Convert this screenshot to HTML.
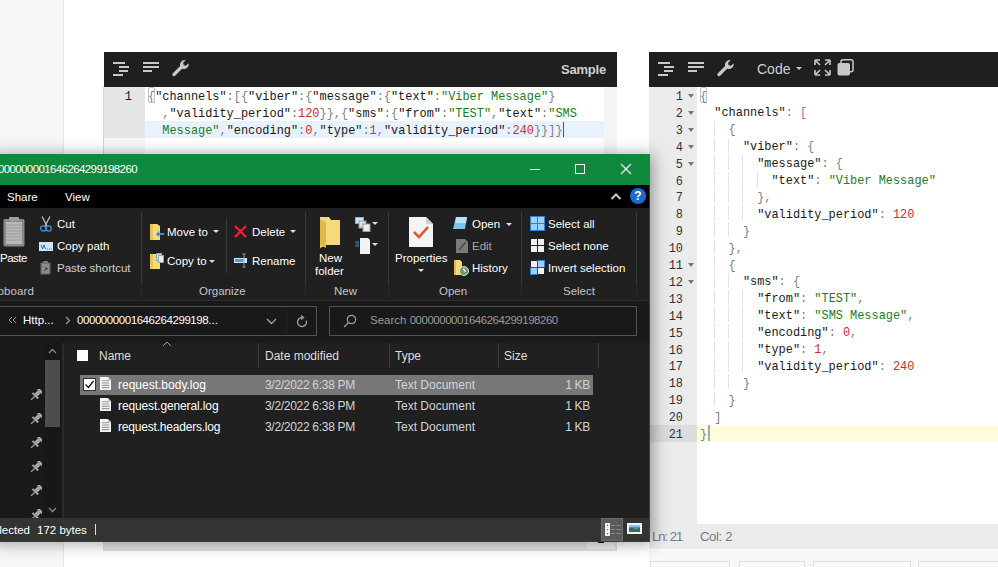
<!DOCTYPE html>
<html><head><meta charset="utf-8">
<style>
*{margin:0;padding:0;box-sizing:border-box}
html,body{width:998px;height:567px;overflow:hidden;background:#fff;font-family:"Liberation Sans",sans-serif;position:relative}
.a{position:absolute}
.mono{font-family:"Liberation Mono",monospace;font-size:11.92px;white-space:pre}
.tb{background:#1f1f1f}
.k{color:#1a1a1a}.p{color:#808080}.s{color:#237a23}.n{color:#d42a2a}
.ln{position:absolute;height:17px;line-height:16.9px}
.ig{position:absolute;width:1px;background:#e2e2e2}
.fa{width:0;height:0;border-left:3px solid transparent;border-right:3px solid transparent;border-top:4px solid #777}
.sep{width:1px;background:#3a3a3a}
.rt{line-height:14px}
.ex.lbl{color:#c4c4c4}
.dd{width:0;height:0;border-left:3px solid transparent;border-right:3px solid transparent;border-top:3px solid #ddd}
.ex{font-family:"Liberation Sans",sans-serif;font-size:11.5px;color:#fff;white-space:nowrap}
</style></head><body>
<!-- sidebar -->
<div class="a" style="left:0;top:0;width:64px;height:567px;background:#f5f6f8;border-right:1px solid #e6e6e6"></div>

<!-- LEFT EDITOR -->
<div class="a tb" style="left:104px;top:52px;width:513px;height:35px"></div>
<div class="a" style="left:103px;top:87px;width:1px;height:460px;background:#d6d6d6"></div>
<div class="a" style="left:104px;top:87px;width:41px;height:460px;background:#f7f7f7"></div>
<div class="a" style="left:104px;top:87px;width:41px;height:50.7px;background:#e6e6e6"></div>
<div class="a" style="left:604px;top:87px;width:13px;height:460px;background:#f5f5f5"></div>
<div class="a" style="left:145px;top:120.8px;width:459px;height:16.9px;background:#e8f2fe"></div>
<div class="a" style="left:103px;top:541px;width:514px;height:10px;background:#e0e0e0"></div>
<div class="a" style="left:587px;top:542px;width:28px;height:7px;background:#eeeeee"></div>
<div class="a" style="left:598px;top:541px;width:6px;height:2px;background:#000"></div>
<div class="a mono" style="left:112px;top:89px;line-height:16.9px;color:#222;width:20px;text-align:right">1</div>
<div class="a mono" style="left:148px;top:89px;line-height:16.9px"><span class="p">{</span><span class="k">"channels"</span><span class="p">:[{</span><span class="k">"viber"</span><span class="p">:{</span><span class="k">"message"</span><span class="p">:{</span><span class="k">"text"</span><span class="p">:</span><span class="s">"Viber Message"</span><span class="p">}</span>
  <span class="p">,</span><span class="k">"validity_period"</span><span class="p">:</span><span class="n">120</span><span class="p">}},{</span><span class="k">"sms"</span><span class="p">:{</span><span class="k">"from"</span><span class="p">:</span><span class="s">"TEST"</span><span class="p">,</span><span class="k">"text"</span><span class="p">:</span><span class="s">"SMS</span>
  <span class="s">Message"</span><span class="p">,</span><span class="k">"encoding"</span><span class="p">:</span><span class="n">0</span><span class="p">,</span><span class="k">"type"</span><span class="p">:</span><span class="n">1</span><span class="p">,</span><span class="k">"validity_period"</span><span class="p">:</span><span class="n">240</span><span class="p">}}]}</span></div>
<div class="a" style="left:148px;top:87px;width:7px;height:16px;border:1px solid #c0c0c0;border-radius:2px"></div>
<div class="a" style="left:563px;top:122px;width:1px;height:15px;background:#555"></div>
<svg class="a" style="left:113px;top:62px" width="17" height="14" viewBox="0 0 17 14"><path d="M0 1h12M6 5h10M6 9h9M0 13h10" stroke="#c8c8c8" stroke-width="2"/></svg><svg class="a" style="left:143px;top:62px" width="17" height="10" viewBox="0 0 17 10"><path d="M0 1h16M0 5h16M0 9h9" stroke="#c8c8c8" stroke-width="2"/></svg><svg class="a" style="left:172px;top:59px" width="18" height="18" viewBox="0 0 18 18"><path d="M2 15.5L9.5 8" stroke="#c8c8c8" stroke-width="3.2" stroke-linecap="round"/><path d="M8.2 7.5a4.8 4.8 0 0 1 5.5-6.3l-2.6 2.6 0.6 2.4 2.4 0.6 2.6-2.6a4.8 4.8 0 0 1-6.3 5.5z" fill="#c8c8c8"/></svg>
<div class="a" style="left:561px;top:62px;font:bold 13px/15px 'Liberation Sans',sans-serif;letter-spacing:-0.2px;color:#d0d0d0">Sample</div>

<!-- RIGHT EDITOR -->
<div class="a tb" style="left:649px;top:52px;width:349px;height:35px"></div>
<svg class="a" style="left:658px;top:62px" width="17" height="14" viewBox="0 0 17 14"><path d="M0 1h12M6 5h10M6 9h9M0 13h10" stroke="#c8c8c8" stroke-width="2"/></svg><svg class="a" style="left:688px;top:62px" width="17" height="10" viewBox="0 0 17 10"><path d="M0 1h16M0 5h16M0 9h9" stroke="#c8c8c8" stroke-width="2"/></svg><svg class="a" style="left:717px;top:59px" width="18" height="18" viewBox="0 0 18 18"><path d="M2 15.5L9.5 8" stroke="#c8c8c8" stroke-width="3.2" stroke-linecap="round"/><path d="M8.2 7.5a4.8 4.8 0 0 1 5.5-6.3l-2.6 2.6 0.6 2.4 2.4 0.6 2.6-2.6a4.8 4.8 0 0 1-6.3 5.5z" fill="#c8c8c8"/></svg><div class="a" style="left:757px;top:61px;font:14px 'Liberation Sans',sans-serif;color:#d0d0d0;line-height:16px">Code</div><div class="a" style="left:796px;top:67px;width:0;height:0;border-left:3px solid transparent;border-right:3px solid transparent;border-top:3px solid #ccc"></div><svg class="a" style="left:814px;top:59px" width="17" height="17" viewBox="0 0 17 17"><path d="M1.5 1.5l4.5 4.5M15.5 1.5l-4.5 4.5M1.5 15.5l4.5-4.5M15.5 15.5l-4.5-4.5" stroke="#c8c8c8" stroke-width="1.6"/><path d="M1 1h5M1 1v5M16 1h-5M16 1v5M1 16h5M1 16v-5M16 16h-5M16 16v-5" stroke="#c8c8c8" stroke-width="1.6"/></svg><svg class="a" style="left:837px;top:59px" width="17" height="17" viewBox="0 0 17 17"><rect x="4" y="0.8" width="12" height="12" rx="2" fill="none" stroke="#c8c8c8" stroke-width="1.5"/><rect x="0.5" y="4" width="12.5" height="12.5" rx="2" fill="#c8c8c8"/></svg>
<div class="a" style="left:649px;top:87px;width:48px;height:437px;background:#ebebeb"></div>
<div class="a" style="left:649px;top:425px;width:48px;height:17px;background:#dcdcdc"></div>
<div class="a" style="left:697px;top:425px;width:301px;height:17px;background:#fffbdd"></div>
<div class="a" style="left:708px;top:425px;width:2px;height:16px;background:#a8a8a0"></div>
<div class="a" style="left:649px;top:524px;width:349px;height:25px;background:#ebebeb"></div>
<div class="a" style="left:649px;top:549px;width:349px;height:1px;background:#fdfdfd"></div>
<div class="a" style="left:649px;top:550px;width:349px;height:17px;background:#f6f7f8"></div>
<div class="a" style="left:650px;top:561px;width:80px;height:10px;border:1px solid #dedede;background:#fafafa"></div>
<div class="a" style="left:739px;top:561px;width:66px;height:10px;border:1px solid #dedede;background:#fafafa"></div>
<div class="a" style="left:813px;top:561px;width:98px;height:10px;border:1px solid #dedede;background:#fafafa"></div>
<div class="a" style="left:918px;top:561px;width:90px;height:10px;border:1px solid #dedede;background:#fafafa"></div>
<div class="a" style="left:652px;top:529px;font-size:13px;line-height:15px;letter-spacing:-1px;color:#7a7a7a">Ln: 21</div>
<div class="a" style="left:700px;top:529px;font-size:13px;line-height:15px;letter-spacing:-0.3px;color:#7a7a7a">Col: 2</div>

<div class="a" style="left:700px;top:87px;width:7px;height:16px;border:1px solid #c0c0c0;border-radius:2px"></div>
<div id="rcode">
<div class="ln mono" style="left:649px;top:89.00px;width:34px;text-align:right;color:#333">1</div>
<div class="a fa" style="left:688px;top:94.00px"></div>
<div class="ln mono" style="left:649px;top:105.90px;width:34px;text-align:right;color:#333">2</div>
<div class="a fa" style="left:688px;top:110.90px"></div>
<div class="ln mono" style="left:649px;top:122.80px;width:34px;text-align:right;color:#333">3</div>
<div class="a fa" style="left:688px;top:127.80px"></div>
<div class="ln mono" style="left:649px;top:139.70px;width:34px;text-align:right;color:#333">4</div>
<div class="a fa" style="left:688px;top:144.70px"></div>
<div class="ln mono" style="left:649px;top:156.60px;width:34px;text-align:right;color:#333">5</div>
<div class="a fa" style="left:688px;top:161.60px"></div>
<div class="ln mono" style="left:649px;top:173.50px;width:34px;text-align:right;color:#333">6</div>
<div class="ln mono" style="left:649px;top:190.40px;width:34px;text-align:right;color:#333">7</div>
<div class="ln mono" style="left:649px;top:207.30px;width:34px;text-align:right;color:#333">8</div>
<div class="ln mono" style="left:649px;top:224.20px;width:34px;text-align:right;color:#333">9</div>
<div class="ln mono" style="left:649px;top:241.10px;width:34px;text-align:right;color:#333">10</div>
<div class="ln mono" style="left:649px;top:258.00px;width:34px;text-align:right;color:#333">11</div>
<div class="a fa" style="left:688px;top:263.00px"></div>
<div class="ln mono" style="left:649px;top:274.90px;width:34px;text-align:right;color:#333">12</div>
<div class="a fa" style="left:688px;top:279.90px"></div>
<div class="ln mono" style="left:649px;top:291.80px;width:34px;text-align:right;color:#333">13</div>
<div class="ln mono" style="left:649px;top:308.70px;width:34px;text-align:right;color:#333">14</div>
<div class="ln mono" style="left:649px;top:325.60px;width:34px;text-align:right;color:#333">15</div>
<div class="ln mono" style="left:649px;top:342.50px;width:34px;text-align:right;color:#333">16</div>
<div class="ln mono" style="left:649px;top:359.40px;width:34px;text-align:right;color:#333">17</div>
<div class="ln mono" style="left:649px;top:376.30px;width:34px;text-align:right;color:#333">18</div>
<div class="ln mono" style="left:649px;top:393.20px;width:34px;text-align:right;color:#333">19</div>
<div class="ln mono" style="left:649px;top:410.10px;width:34px;text-align:right;color:#333">20</div>
<div class="ln mono" style="left:649px;top:427.00px;width:34px;text-align:right;color:#333">21</div>
<div class="ln mono" style="left:700px;top:88.50px"><span class="p">{</span></div>
<div class="ln mono" style="left:700px;top:105.40px">  <span class="k">&quot;channels&quot;</span><span class="p">:</span> <span class="p">[</span></div>
<div class="ig" style="left:714px;top:120.8px;height:15px"></div>
<div class="ln mono" style="left:700px;top:122.30px">    <span class="p">{</span></div>
<div class="ig" style="left:714px;top:137.7px;height:15px"></div>
<div class="ig" style="left:728px;top:137.7px;height:15px"></div>
<div class="ln mono" style="left:700px;top:139.20px">      <span class="k">&quot;viber&quot;</span><span class="p">:</span> <span class="p">{</span></div>
<div class="ig" style="left:714px;top:154.6px;height:15px"></div>
<div class="ig" style="left:728px;top:154.6px;height:15px"></div>
<div class="ig" style="left:742px;top:154.6px;height:15px"></div>
<div class="ln mono" style="left:700px;top:156.10px">        <span class="k">&quot;message&quot;</span><span class="p">:</span> <span class="p">{</span></div>
<div class="ig" style="left:714px;top:171.5px;height:15px"></div>
<div class="ig" style="left:728px;top:171.5px;height:15px"></div>
<div class="ig" style="left:742px;top:171.5px;height:15px"></div>
<div class="ig" style="left:757px;top:171.5px;height:15px"></div>
<div class="ln mono" style="left:700px;top:173.00px">          <span class="k">&quot;text&quot;</span><span class="p">:</span> <span class="s">&quot;Viber Message&quot;</span></div>
<div class="ig" style="left:714px;top:188.4px;height:15px"></div>
<div class="ig" style="left:728px;top:188.4px;height:15px"></div>
<div class="ig" style="left:742px;top:188.4px;height:15px"></div>
<div class="ln mono" style="left:700px;top:189.90px">        <span class="p">}</span><span class="p">,</span></div>
<div class="ig" style="left:714px;top:205.3px;height:15px"></div>
<div class="ig" style="left:728px;top:205.3px;height:15px"></div>
<div class="ig" style="left:742px;top:205.3px;height:15px"></div>
<div class="ln mono" style="left:700px;top:206.80px">        <span class="k">&quot;validity_period&quot;</span><span class="p">:</span> <span class="n">120</span></div>
<div class="ig" style="left:714px;top:222.2px;height:15px"></div>
<div class="ig" style="left:728px;top:222.2px;height:15px"></div>
<div class="ln mono" style="left:700px;top:223.70px">      <span class="p">}</span></div>
<div class="ig" style="left:714px;top:239.1px;height:15px"></div>
<div class="ln mono" style="left:700px;top:240.60px">    <span class="p">}</span><span class="p">,</span></div>
<div class="ig" style="left:714px;top:256.0px;height:15px"></div>
<div class="ln mono" style="left:700px;top:257.50px">    <span class="p">{</span></div>
<div class="ig" style="left:714px;top:272.9px;height:15px"></div>
<div class="ig" style="left:728px;top:272.9px;height:15px"></div>
<div class="ln mono" style="left:700px;top:274.40px">      <span class="k">&quot;sms&quot;</span><span class="p">:</span> <span class="p">{</span></div>
<div class="ig" style="left:714px;top:289.8px;height:15px"></div>
<div class="ig" style="left:728px;top:289.8px;height:15px"></div>
<div class="ig" style="left:742px;top:289.8px;height:15px"></div>
<div class="ln mono" style="left:700px;top:291.30px">        <span class="k">&quot;from&quot;</span><span class="p">:</span> <span class="s">&quot;TEST&quot;</span><span class="p">,</span></div>
<div class="ig" style="left:714px;top:306.7px;height:15px"></div>
<div class="ig" style="left:728px;top:306.7px;height:15px"></div>
<div class="ig" style="left:742px;top:306.7px;height:15px"></div>
<div class="ln mono" style="left:700px;top:308.20px">        <span class="k">&quot;text&quot;</span><span class="p">:</span> <span class="s">&quot;SMS Message&quot;</span><span class="p">,</span></div>
<div class="ig" style="left:714px;top:323.6px;height:15px"></div>
<div class="ig" style="left:728px;top:323.6px;height:15px"></div>
<div class="ig" style="left:742px;top:323.6px;height:15px"></div>
<div class="ln mono" style="left:700px;top:325.10px">        <span class="k">&quot;encoding&quot;</span><span class="p">:</span> <span class="n">0</span><span class="p">,</span></div>
<div class="ig" style="left:714px;top:340.5px;height:15px"></div>
<div class="ig" style="left:728px;top:340.5px;height:15px"></div>
<div class="ig" style="left:742px;top:340.5px;height:15px"></div>
<div class="ln mono" style="left:700px;top:342.00px">        <span class="k">&quot;type&quot;</span><span class="p">:</span> <span class="n">1</span><span class="p">,</span></div>
<div class="ig" style="left:714px;top:357.4px;height:15px"></div>
<div class="ig" style="left:728px;top:357.4px;height:15px"></div>
<div class="ig" style="left:742px;top:357.4px;height:15px"></div>
<div class="ln mono" style="left:700px;top:358.90px">        <span class="k">&quot;validity_period&quot;</span><span class="p">:</span> <span class="n">240</span></div>
<div class="ig" style="left:714px;top:374.3px;height:15px"></div>
<div class="ig" style="left:728px;top:374.3px;height:15px"></div>
<div class="ln mono" style="left:700px;top:375.80px">      <span class="p">}</span></div>
<div class="ig" style="left:714px;top:391.2px;height:15px"></div>
<div class="ln mono" style="left:700px;top:392.70px">    <span class="p">}</span></div>
<div class="ln mono" style="left:700px;top:409.60px">  <span class="p">]</span></div>
<div class="ln mono" style="left:700px;top:426.50px"><span class="p">}</span></div>
</div><!--/rcode-->

<!-- EXPLORER WINDOW -->
<div class="a" style="left:-10px;top:154px;width:660px;height:388px;background:#202020;box-shadow:3px 1px 15px rgba(0,0,0,.38);border-right:1px solid #10893e;border-bottom:1px solid #10893e"></div>
<!-- title -->
<div class="a" style="left:0;top:154px;width:649px;height:31px;background:#10893e"></div>
<div class="a ex" style="left:-163px;top:162px;width:300px;text-align:right;letter-spacing:-0.6px;line-height:15px">0000000001646264299198260</div>
<div class="a" style="left:530px;top:169px;width:10px;height:1px;background:#fff"></div>
<div class="a" style="left:575px;top:164px;width:10px;height:10px;border:1px solid #fff"></div>
<svg class="a" style="left:620px;top:163px" width="12" height="12" viewBox="0 0 12 12"><path d="M1 1L11 11M11 1L1 11" stroke="#fff" stroke-width="1.1"/></svg>
<!-- tabs -->
<div class="a" style="left:0;top:185px;width:649px;height:23px;background:#000"></div>
<div class="a ex" style="left:7px;top:190px;line-height:14px">Share</div>
<div class="a ex" style="left:65px;top:190px;line-height:14px">View</div>
<svg class="a" style="left:610px;top:192px" width="12" height="8" viewBox="0 0 12 8"><path d="M1.5 7L6 2.5L10.5 7" stroke="#c8c8c8" stroke-width="2" fill="none"/></svg>
<div class="a" style="left:630px;top:188px;width:16px;height:16px;border-radius:50%;background:#1c6cc8;color:#fff;font:bold 12px 'Liberation Sans',sans-serif;text-align:center;line-height:16px">?</div>
<!-- ribbon -->
<div class="a" style="left:0;top:208px;width:649px;height:92px;background:#202020"></div>
<div class="a" style="left:0;top:300px;width:649px;height:1px;background:#2e2e2e"></div>
<div class="a" style="left:0;top:301px;width:649px;height:41px;background:#191919"></div>
<div class="a sep" style="left:141px;top:212px;height:71px"></div>
<div class="a sep" style="left:305px;top:212px;height:71px"></div>
<div class="a sep" style="left:388px;top:212px;height:71px"></div>
<div class="a sep" style="left:521px;top:212px;height:71px"></div>
<div class="a sep" style="left:636px;top:212px;height:71px"></div>
<div class="a sep" style="left:226px;top:218px;height:55px"></div>
<div class="a" style="left:141px;top:283px;width:1px;height:14px;background:#2a2a2a"></div>
<div class="a" style="left:305px;top:283px;width:1px;height:14px;background:#2a2a2a"></div>
<div class="a" style="left:388px;top:283px;width:1px;height:14px;background:#2a2a2a"></div>
<div class="a" style="left:521px;top:283px;width:1px;height:14px;background:#2a2a2a"></div>
<div class="a" style="left:636px;top:283px;width:1px;height:14px;background:#2a2a2a"></div>
<!-- clipboard -->
<svg class="a" style="left:3px;top:216px" width="22" height="31" viewBox="0 0 22 31"><rect x="0.5" y="3" width="21" height="27.5" rx="1.5" fill="#8a8a8a"/><rect x="3" y="6" width="16" height="22" fill="#b8b8b8"/><path d="M3 9h16M3 12h16M3 15h16M3 18h16M3 21h16M3 24h16" stroke="#9a9a9a" stroke-width="1"/><rect x="6" y="1" width="10" height="4" rx="1" fill="#a0a0a0"/></svg>
<div class="a ex rt" style="left:0px;top:251px;letter-spacing:-0.5px">Paste</div>
<svg class="a" style="left:40px;top:216px" width="12" height="16" viewBox="0 0 12 16"><path d="M2 0.5L7 10M10 0.5L5 10" stroke="#c0c0c0" stroke-width="1.3" fill="none"/><circle cx="3.3" cy="12.5" r="2.6" stroke="#3d8fd8" stroke-width="1.4" fill="none"/><circle cx="8.7" cy="12.5" r="2.6" stroke="#3d8fd8" stroke-width="1.4" fill="none"/></svg>
<div class="a ex rt" style="left:57px;top:217px">Cut</div>
<svg class="a" style="left:39px;top:242px" width="14" height="9" viewBox="0 0 14 9"><rect x="0" y="0" width="14" height="9" fill="#cfe6fb"/><path d="M2 3l1.5 4 1.5-4 1.5 4M8 7h1M10 7h1M12 7h1" stroke="#2a6fb0" stroke-width="1" fill="none"/></svg>
<div class="a ex rt" style="left:57px;top:239px">Copy path</div>
<svg class="a" style="left:40px;top:261px" width="11" height="14" viewBox="0 0 11 14"><rect x="0.5" y="1.5" width="10" height="12" rx="1" fill="#6e6e6e"/><rect x="2" y="3" width="7" height="9" fill="#8c8c8c"/><path d="M4 10l3-3M5 7h2v2" stroke="#3a3a3a" stroke-width="1" fill="none"/><rect x="3" y="0" width="5" height="2.5" fill="#777"/></svg>
<div class="a ex rt" style="left:57px;top:261px;color:#cfcfcf">Paste shortcut</div>
<div class="a ex rt lbl" style="left:-100px;top:284px;width:134px;text-align:right;letter-spacing:0.1px">Clipboard</div>
<!-- organize -->
<svg class="a" style="left:150px;top:224px" width="14" height="16" viewBox="0 0 14 16"><path d="M0 0h7l3 2v14H0z" fill="#f6d97a"/><path d="M0 0h3v16H0z" fill="#e8c45a"/><path d="M6 10l3-3v2h5v2H9v2z" fill="#3a8fd8"/></svg>
<div class="a ex rt" style="left:167px;top:225px">Move to</div>
<div class="a dd" style="left:213px;top:230px"></div>
<svg class="a" style="left:150px;top:253px" width="14" height="16" viewBox="0 0 14 16"><path d="M0 1h7l3 2v13H0z" fill="#f6d97a"/><path d="M0 1h3v15H0z" fill="#e8c45a"/><rect x="6.5" y="0.5" width="5" height="7" fill="#ddd" stroke="#8aa" stroke-width="1"/><rect x="8.5" y="2.5" width="5" height="7" fill="#eee" stroke="#8aa" stroke-width="1"/></svg>
<div class="a ex rt" style="left:167px;top:254px">Copy to</div>
<div class="a dd" style="left:209px;top:260px"></div>
<svg class="a" style="left:234px;top:225px" width="13" height="13" viewBox="0 0 13 13"><path d="M1 1L12 12M12 1L1 12" stroke="#e8262b" stroke-width="2.2"/></svg>
<div class="a ex rt" style="left:252px;top:225px">Delete</div>
<div class="a dd" style="left:290px;top:230px"></div>
<svg class="a" style="left:234px;top:253px" width="14" height="15" viewBox="0 0 14 15"><rect x="0" y="5" width="13" height="5" fill="#cfe6fb"/><rect x="1" y="6" width="8" height="3" fill="#4a9ae0"/><path d="M10 1v13M8.5 1h3M8.5 14h3" stroke="#9a9a9a" stroke-width="1" fill="none"/></svg>
<div class="a ex rt" style="left:252px;top:254px">Rename</div>
<div class="a ex rt lbl" style="left:199px;top:284px">Organize</div>
<!-- new -->
<svg class="a" style="left:320px;top:217px" width="20" height="31" viewBox="0 0 20 31"><path d="M0 0h9l2 3h9v25H6L0 31z" fill="#f6d97a"/><path d="M0 2l6 3v26L0 28z" fill="#e0b84c"/></svg>
<div class="a ex rt" style="left:319px;top:251px">New</div>
<div class="a ex rt" style="left:315px;top:264px">folder</div>
<svg class="a" style="left:355px;top:217px" width="16" height="15" viewBox="0 0 16 15"><rect x="0.5" y="0.5" width="8" height="6" fill="#cfe6fb" stroke="#9ab" stroke-width="1"/><rect x="4" y="4" width="7" height="7" fill="#ddd" stroke="#999" stroke-width="1"/><rect x="8" y="7" width="7" height="7.5" fill="#eee" stroke="#999" stroke-width="1"/></svg>
<div class="a dd" style="left:372px;top:222px"></div>
<svg class="a" style="left:355px;top:237px" width="16" height="18" viewBox="0 0 16 18"><path d="M5 1h8l2 2v14H5z" fill="#f2f2f2"/><path d="M0 5h4M1 7h3M0 9h4" stroke="#3a8fd8" stroke-width="1"/></svg>
<div class="a dd" style="left:372px;top:243px"></div>
<div class="a ex rt lbl" style="left:334px;top:284px">New</div>
<!-- open -->
<svg class="a" style="left:409px;top:217px" width="24" height="30" viewBox="0 0 24 30"><path d="M0 0h17l7 7v23H0z" fill="#f4f4f4"/><path d="M17 0v7h7z" fill="#d0d0d0"/><path d="M5 15l5 5 9-10" stroke="#e2582a" stroke-width="2.6" fill="none"/></svg>
<div class="a ex rt" style="left:395px;top:251px">Properties</div>
<div class="a dd" style="left:418px;top:269px"></div>
<svg class="a" style="left:453px;top:216px" width="15" height="14" viewBox="0 0 15 14"><path d="M3 1h11l-2 12H0z" fill="#7fc3e8"/><path d="M3 1h11l-1 6H2z" fill="#b8e2f6"/></svg>
<div class="a ex rt" style="left:472px;top:217px">Open</div>
<div class="a dd" style="left:506px;top:223px"></div>
<svg class="a" style="left:456px;top:239px" width="12" height="14" viewBox="0 0 12 14"><path d="M0 0h9l3 3v11H0z" fill="#7a7a7a"/><path d="M3 11l7-8" stroke="#4a4a4a" stroke-width="1.3"/></svg>
<div class="a ex rt" style="left:472px;top:239px;color:#a8a8a8">Edit</div>
<svg class="a" style="left:454px;top:260px" width="15" height="16" viewBox="0 0 15 16"><path d="M0 0h6l2 2v13H0z" fill="#f6d97a"/><path d="M0 0h2v15H0z" fill="#e0b84c"/><circle cx="10" cy="11" r="4.5" fill="#6a9a6a" stroke="#ddd" stroke-width="1"/><path d="M10 8v3h2" stroke="#fff" stroke-width="1" fill="none"/></svg>
<div class="a ex rt" style="left:472px;top:261px">History</div>
<div class="a ex rt lbl" style="left:439px;top:284px">Open</div>
<!-- select -->
<svg class="a" style="left:530px;top:216px" width="15" height="15" viewBox="0 0 15 15"><rect x="0" y="0" width="15" height="15" fill="#2e7fd0"/><rect x="1" y="1" width="6" height="6" fill="#9bd0f7"/><rect x="8" y="1" width="6" height="6" fill="#9bd0f7"/><rect x="1" y="8" width="6" height="6" fill="#9bd0f7"/><rect x="8" y="8" width="6" height="6" fill="#9bd0f7"/></svg>
<div class="a ex rt" style="left:548px;top:217px">Select all</div>
<svg class="a" style="left:530px;top:238px" width="15" height="15" viewBox="0 0 15 15"><rect x="1" y="1" width="6" height="6" fill="#f0f0f0"/><rect x="8" y="1" width="6" height="6" fill="#f0f0f0"/><rect x="1" y="8" width="6" height="6" fill="#f0f0f0"/><rect x="8" y="8" width="6" height="6" fill="#f0f0f0"/></svg>
<div class="a ex rt" style="left:548px;top:239px">Select none</div>
<svg class="a" style="left:530px;top:260px" width="15" height="15" viewBox="0 0 15 15"><rect x="7.5" y="0" width="7.5" height="7.5" fill="#2e7fd0"/><rect x="0" y="7.5" width="7.5" height="7.5" fill="#2e7fd0"/><rect x="1" y="1" width="6" height="6" fill="#f0f0f0"/><rect x="8" y="1" width="6" height="6" fill="#9bd0f7"/><rect x="1" y="8" width="6" height="6" fill="#9bd0f7"/><rect x="8" y="8" width="6" height="6" fill="#f0f0f0"/></svg>
<div class="a ex rt" style="left:548px;top:261px">Invert selection</div>
<div class="a ex rt lbl" style="left:563px;top:284px">Select</div>
<!-- address bar -->
<div class="a" style="left:-1px;top:306px;width:318px;height:30px;border:1px solid #525252;background:#191919"></div>
<div class="a" style="left:286px;top:307px;width:1px;height:28px;background:#222"></div>
<svg class="a" style="left:8px;top:316px" width="9" height="8" viewBox="0 0 9 8"><path d="M4 1L1 4l3 3M8 1L5 4l3 3" stroke="#999" stroke-width="1" fill="none"/></svg>
<div class="a ex rt" style="left:23px;top:313px">Http...</div>
<svg class="a" style="left:65px;top:316px" width="6" height="9" viewBox="0 0 6 9"><path d="M1 1l3.5 3.5L1 8" stroke="#999" stroke-width="1.3" fill="none"/></svg>
<div class="a ex rt" style="left:77px;top:313px"><span style="letter-spacing:-0.43px">0000000001646264299198</span>...</div>
<svg class="a" style="left:266px;top:318px" width="11" height="7" viewBox="0 0 11 7"><path d="M1 1l4.5 4.5L10 1" stroke="#a0a0a0" stroke-width="1.4" fill="none"/></svg>
<svg class="a" style="left:296px;top:315px" width="12" height="13" viewBox="0 0 12 13"><path d="M6 2.5a4.5 4.5 0 1 0 4.2 2.9" stroke="#9a9a9a" stroke-width="1.4" fill="none"/><path d="M5 0.5l2.5 2-2.5 2" stroke="#9a9a9a" stroke-width="1.4" fill="none"/></svg>
<div class="a" style="left:329px;top:306px;width:308px;height:30px;border:1px solid #525252;background:#191919"></div>
<svg class="a" style="left:343px;top:314px" width="14" height="14" viewBox="0 0 14 14"><circle cx="8.5" cy="5.5" r="4.2" stroke="#9a9a9a" stroke-width="1.2" fill="none"/><path d="M5.5 8.5L1 13" stroke="#9a9a9a" stroke-width="1.3"/></svg>
<div class="a ex rt" style="left:370px;top:313px;color:#999">Search <span style="letter-spacing:-0.47px">0000000001646264299198260</span></div>
<!-- nav pane -->
<div class="a" style="left:0;top:336px;width:649px;height:182px;background:#191919"></div>
<div class="a" style="left:44px;top:343px;width:17px;height:175px;background:#171717"></div>
<div class="a" style="left:45px;top:360px;width:15px;height:67px;background:#4d4d4d"></div>
<svg class="a" style="left:48px;top:348px" width="9" height="6" viewBox="0 0 9 6"><path d="M1 5l3.5-3.5L8 5" stroke="#8a8a8a" stroke-width="1.3" fill="none"/></svg>
<svg class="a" style="left:48px;top:507px" width="9" height="6" viewBox="0 0 9 6"><path d="M1 1l3.5 3.5L8 1" stroke="#8a8a8a" stroke-width="1.3" fill="none"/></svg>
<div class="a" style="left:62px;top:343px;width:2px;height:175px;background:#2a2a2a"></div>
<svg class="a" style="left:30px;top:389px" width="12" height="12" viewBox="0 0 12 12"><g transform="rotate(45 6 6)" fill="#a3abb3"><rect x="3" y="-1" width="6" height="2.5"/><rect x="4" y="1.5" width="4" height="4.5"/><rect x="2" y="6" width="8" height="2"/><rect x="5.4" y="8" width="1.2" height="5"/></g></svg>
<svg class="a" style="left:30px;top:413px" width="12" height="12" viewBox="0 0 12 12"><g transform="rotate(45 6 6)" fill="#a3abb3"><rect x="3" y="-1" width="6" height="2.5"/><rect x="4" y="1.5" width="4" height="4.5"/><rect x="2" y="6" width="8" height="2"/><rect x="5.4" y="8" width="1.2" height="5"/></g></svg>
<svg class="a" style="left:30px;top:437px" width="12" height="12" viewBox="0 0 12 12"><g transform="rotate(45 6 6)" fill="#a3abb3"><rect x="3" y="-1" width="6" height="2.5"/><rect x="4" y="1.5" width="4" height="4.5"/><rect x="2" y="6" width="8" height="2"/><rect x="5.4" y="8" width="1.2" height="5"/></g></svg>
<svg class="a" style="left:30px;top:461px" width="12" height="12" viewBox="0 0 12 12"><g transform="rotate(45 6 6)" fill="#a3abb3"><rect x="3" y="-1" width="6" height="2.5"/><rect x="4" y="1.5" width="4" height="4.5"/><rect x="2" y="6" width="8" height="2"/><rect x="5.4" y="8" width="1.2" height="5"/></g></svg>
<svg class="a" style="left:30px;top:485px" width="12" height="12" viewBox="0 0 12 12"><g transform="rotate(45 6 6)" fill="#a3abb3"><rect x="3" y="-1" width="6" height="2.5"/><rect x="4" y="1.5" width="4" height="4.5"/><rect x="2" y="6" width="8" height="2"/><rect x="5.4" y="8" width="1.2" height="5"/></g></svg>
<svg class="a" style="left:30px;top:509px" width="12" height="12" viewBox="0 0 12 12"><g transform="rotate(45 6 6)" fill="#a3abb3"><rect x="3" y="-1" width="6" height="2.5"/><rect x="4" y="1.5" width="4" height="4.5"/><rect x="2" y="6" width="8" height="2"/><rect x="5.4" y="8" width="1.2" height="5"/></g></svg>
<!-- file list -->
<div class="a" style="left:64px;top:343px;width:585px;height:175px;background:#202020"></div>
<div class="a" style="left:77px;top:350px;width:11px;height:11px;background:#fff"></div>
<div class="a ex rt" style="left:99px;top:349px;color:#dedede;font-size:12px">Name</div>
<svg class="a" style="left:162px;top:341px" width="10" height="6" viewBox="0 0 10 6"><path d="M1 5l4-4 4 4" stroke="#a0a0a0" stroke-width="1" fill="none"/></svg>
<div class="a" style="left:258px;top:343px;width:1px;height:25px;background:#3c3c3c"></div>
<div class="a" style="left:389px;top:343px;width:1px;height:25px;background:#3c3c3c"></div>
<div class="a" style="left:498px;top:343px;width:1px;height:25px;background:#3c3c3c"></div>
<div class="a" style="left:598px;top:343px;width:1px;height:25px;background:#3c3c3c"></div>
<div class="a ex rt" style="left:265px;top:349px;color:#dedede;font-size:12px">Date modified</div>
<div class="a ex rt" style="left:395px;top:349px;color:#dedede;font-size:12px">Type</div>
<div class="a ex rt" style="left:504px;top:349px;color:#dedede;font-size:12px">Size</div>
<div class="a" style="left:80px;top:375px;width:513px;height:20px;background:#777"></div>
<div class="a" style="left:83px;top:378px;width:13px;height:13px;background:#fff;border:1px solid #333"></div>
<svg class="a" style="left:84px;top:379px" width="11" height="11" viewBox="0 0 11 11"><path d="M1.5 5.5l3 3 5-6.5" stroke="#111" stroke-width="1.3" fill="none"/></svg>
<svg class="a" style="left:100px;top:377px" width="11" height="13" viewBox="0 0 12 14" preserveAspectRatio="none"><path d="M0 0h8.5l3.5 3.5V14H0z" fill="#f4f4f4"/><path d="M8.5 0v3.5H12z" fill="#c8c8c8"/><path d="M2 4h8M2 6.5h8M2 9h8M2 11.5h8" stroke="#9a9a9a" stroke-width="1.2"/></svg>
<div class="a ex rt" style="left:118px;top:378px;font-size:12px">request.body.log</div>
<div class="a ex rt" style="left:265px;top:378px;color:#d4d4d4;font-size:12px;letter-spacing:-0.3px">3/2/2022 6:38 PM</div>
<div class="a ex rt" style="left:395px;top:378px;color:#d4d4d4;font-size:12px">Text Document</div>
<div class="a ex rt" style="left:540px;top:378px;width:50px;text-align:right;color:#d4d4d4;font-size:12px;letter-spacing:-0.3px">1 KB</div>
<svg class="a" style="left:100px;top:398px" width="11" height="13" viewBox="0 0 12 14" preserveAspectRatio="none"><path d="M0 0h8.5l3.5 3.5V14H0z" fill="#f4f4f4"/><path d="M8.5 0v3.5H12z" fill="#c8c8c8"/><path d="M2 4h8M2 6.5h8M2 9h8M2 11.5h8" stroke="#9a9a9a" stroke-width="1.2"/></svg>
<div class="a ex rt" style="left:118px;top:399px;font-size:12px;letter-spacing:-0.12px">request.general.log</div>
<div class="a ex rt" style="left:265px;top:399px;color:#d4d4d4;font-size:12px;letter-spacing:-0.3px">3/2/2022 6:38 PM</div>
<div class="a ex rt" style="left:395px;top:399px;color:#d4d4d4;font-size:12px">Text Document</div>
<div class="a ex rt" style="left:540px;top:399px;width:50px;text-align:right;color:#d4d4d4;font-size:12px;letter-spacing:-0.3px">1 KB</div>
<svg class="a" style="left:100px;top:419px" width="11" height="13" viewBox="0 0 12 14" preserveAspectRatio="none"><path d="M0 0h8.5l3.5 3.5V14H0z" fill="#f4f4f4"/><path d="M8.5 0v3.5H12z" fill="#c8c8c8"/><path d="M2 4h8M2 6.5h8M2 9h8M2 11.5h8" stroke="#9a9a9a" stroke-width="1.2"/></svg>
<div class="a ex rt" style="left:118px;top:420px;font-size:12px;letter-spacing:-0.2px">request.headers.log</div>
<div class="a ex rt" style="left:265px;top:420px;color:#d4d4d4;font-size:12px;letter-spacing:-0.3px">3/2/2022 6:38 PM</div>
<div class="a ex rt" style="left:395px;top:420px;color:#d4d4d4;font-size:12px">Text Document</div>
<div class="a ex rt" style="left:540px;top:420px;width:50px;text-align:right;color:#d4d4d4;font-size:12px;letter-spacing:-0.3px">1 KB</div>
<!-- status -->
<div class="a" style="left:0;top:518px;width:649px;height:23px;background:#333333"></div>
<div class="a ex rt" style="left:-200px;top:523px;width:230px;text-align:right">Selected</div>
<div class="a ex rt" style="left:37px;top:523px">172 bytes</div>
<div class="a" style="left:95px;top:524px;width:1px;height:11px;background:#ddd"></div>
<div class="a" style="left:601px;top:518px;width:22px;height:23px;background:#5a5a5a;border:1px solid #6e6e6e"></div>
<svg class="a" style="left:605px;top:523px" width="17" height="14" viewBox="0 0 17 14"><rect x="0" y="0" width="5" height="13" fill="#e8e8e8"/><rect x="0.8" y="0.6" width="3.4" height="3.4" fill="#fff"/><rect x="0.8" y="4.8" width="3.4" height="3.4" fill="#fff"/><rect x="0.8" y="9" width="3.4" height="3.4" fill="#fff"/><rect x="2" y="1.8" width="1.2" height="1.2" fill="#444"/><rect x="2" y="6" width="1.2" height="1.2" fill="#5a6a9a"/><rect x="2" y="10.2" width="1.2" height="1.2" fill="#8a2a2a"/><path d="M6 2.5h4M11.5 2.5h4M6 6.5h4M11.5 6.5h4M6 10.5h4M11.5 10.5h4" stroke="#8a8a8a" stroke-width="1"/></svg>
<svg class="a" style="left:627px;top:523px" width="15" height="11" viewBox="0 0 15 11"><rect x="0" y="0" width="15" height="11" fill="#f2f2f2"/><rect x="2" y="2" width="11" height="7" fill="#5a8fc0"/><path d="M2 5.5q3-2 5 0t6-1V9H2z" fill="#3a6a5a"/><path d="M2 2h11v2H2z" fill="#8fc0e8"/></svg>
<div class="a" style="left:649px;top:185px;width:1px;height:357px;background:#0c5a2a"></div>
<div class="a" style="left:0;top:541px;width:650px;height:1px;background:#0c5a2a"></div>
</body></html>
